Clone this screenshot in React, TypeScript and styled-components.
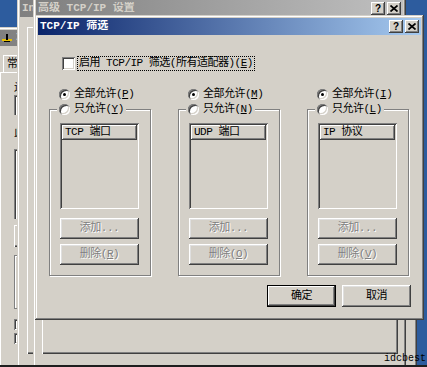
import React from 'react';
import styled, { createGlobalStyle } from 'styled-components';

const FACE = '#d4d0c8';
const FONT = `"Liberation Mono", "Noto Sans CJK SC", monospace`;

const GlobalStyle = createGlobalStyle`
	html, body {
		margin: 0;
		padding: 0;
	}

	body {
		background: #2d5c9e;
		font-family: ${FONT};
		font-size: 11px;
		color: #000;
	}
`;

const Desktop = styled.div`
	position: relative;
	width: 427px;
	height: 365px;
	overflow: hidden;
	background: #2d5c9e;
	border-bottom: 2px solid #1e1e1e;
`;

// windows sit on a free desktop, so their place is the content
const Window = styled.div<{ $x: number; $y: number; $w: number; $h: number }>`
	position: absolute;
	left: ${p => p.$x}px;
	top: ${p => p.$y}px;
	width: ${p => p.$w}px;
	height: ${p => p.$h}px;
	box-sizing: border-box;
	padding: 3px;
	background: ${FACE};
	box-shadow: inset -1px -1px #404040, inset 1px 1px ${FACE}, inset -2px -2px #808080, inset 2px 2px #fff;
	display: flex;
	flex-direction: column;
`;

const TitleBar = styled.div<{ $active?: boolean; $h?: number }>`
	flex: none;
	height: ${p => p.$h ?? 17}px;
	display: flex;
	align-items: center;
	gap: 2px;
	padding: 0 2px 0 1px;
	background: ${p => (p.$active ? 'linear-gradient(to right, #0a246a, #a6caf0)' : 'linear-gradient(to right, #808080, #c0c0c0)')};
	color: ${p => (p.$active ? '#fff' : FACE)};
	font-weight: bold;
	font-size: 11px;
	line-height: 13px;
	white-space: nowrap;
	overflow: hidden;
`;

// $clip keeps the box of a title that is covered by the next window narrow
const TitleText = styled.span<{ $clip?: number }>`
	flex: ${p => (p.$clip ? 'none' : '1')};
	width: ${p => (p.$clip ? `${p.$clip}px` : 'auto')};
	padding-left: 1px;
	overflow: hidden;
`;

const CaptionButton = styled.span`
	flex: none;
	width: 14px;
	height: 13px;
	box-sizing: border-box;
	display: flex;
	align-items: center;
	justify-content: center;
	background: ${FACE};
	box-shadow: inset -1px -1px #404040, inset 1px 1px #fff, inset -2px -2px #808080;
	color: #000;
	font: bold 10px "Liberation Sans", sans-serif;
	padding-bottom: 1px;
`;

const DialogBody = styled.div`
	flex: 1;
	display: flex;
	flex-direction: column;
	padding: 21px 10px 0 11px;
	letter-spacing: -0.5px;
	line-height: 13px;
`;

const CheckRow = styled.div`
	display: flex;
	align-items: center;
	gap: 3px;
	height: 15px;
	margin-left: 13px;
`;

const CheckBox = styled.span<{ $size?: number }>`
	flex: none;
	width: ${p => p.$size ?? 13}px;
	height: ${p => p.$size ?? 13}px;
	box-sizing: border-box;
	background: #fff;
	box-shadow: inset 1px 1px #808080, inset -1px -1px #fff, inset 2px 2px #404040, inset -2px -2px ${FACE};
`;

const FocusLabel = styled.span`
	padding: 0 1px;
	outline: 1px dotted #000;
	outline-offset: 0;
`;

const Columns = styled.div`
	display: grid;
	grid-template-columns: repeat(3, 102px);
	column-gap: 27px;
	margin-top: 16px;
`;

const Column = styled.div`
	display: flex;
	flex-direction: column;
`;

const RadioRow = styled.div<{ $indent?: number }>`
	display: flex;
	align-items: center;
	gap: 4px;
	height: 15px;
	margin-left: ${p => p.$indent ?? 0}px;
	white-space: nowrap;
`;

const Radio = styled.span<{ $checked?: boolean }>`
	position: relative;
	flex: none;
	width: 11px;
	height: 11px;
	border-radius: 50%;
	background: #fff;
	box-shadow: inset 1px 1px 0 #808080, inset -1px -1px 0 #fff, inset 2px 2px 0 #404040, inset -2px -2px 0 ${FACE};

	&::after {
		content: '';
		display: ${p => (p.$checked ? 'block' : 'none')};
		position: absolute;
		left: 4px;
		top: 4px;
		width: 3px;
		height: 3px;
		border-radius: 50%;
		background: #000;
	}
`;

const Key = styled.span`
	text-decoration: underline;
`;

const GroupBox = styled.fieldset`
	margin: 0;
	min-width: 0;
	padding: 0 11px 10px 7px;
	border: 1px solid #808080;
	box-shadow: inset 1px 1px 0 #fff, 1px 1px 0 #fff;
	display: flex;
	flex-direction: column;
`;

const Caption = styled.legend`
	padding: 0 2px;
	background: ${FACE};
`;

const GroupContent = styled.div`
	margin-left: 3px;
	display: flex;
	flex-direction: column;
`;

const ListBox = styled.div`
	height: 86px;
	margin-top: 6px;
	padding: 2px;
	box-sizing: border-box;
	background: ${FACE};
	box-shadow: inset 1px 1px #808080, inset -1px -1px #fff, inset 2px 2px #404040, inset -2px -2px ${FACE};
`;

const ListHeader = styled.div`
	height: 15px;
	box-sizing: border-box;
	padding: 1px 0 0 3px;
	line-height: 13px;
	box-shadow: inset -1px -1px #404040, inset 1px 1px #fff, inset -2px -2px #808080;
`;

const PushButton = styled.div<{ $default?: boolean; $disabled?: boolean; $w?: number; $h?: number }>`
	box-sizing: border-box;
	width: ${p => (p.$w ? `${p.$w}px` : 'auto')};
	height: ${p => p.$h ?? 21}px;
	display: flex;
	align-items: center;
	justify-content: center;
	background: ${FACE};
	color: ${p => (p.$disabled ? '#808080' : '#000')};
	text-shadow: ${p => (p.$disabled ? '1px 1px 0 #fff' : 'none')};
	box-shadow: ${p =>
		p.$default
			? 'inset 0 0 0 1px #000, inset -2px -2px #404040, inset 2px 2px #fff, inset -3px -3px #808080'
			: 'inset -1px -1px #404040, inset 1px 1px #fff, inset -2px -2px #808080, inset 2px 2px #dfdfdf'};
	margin-top: ${p => (p.$w ? 0 : 5)}px;
`;

const AddButton = styled(PushButton)`
	margin-top: 9px;
`;

const ButtonRow = styled.div`
	display: flex;
	justify-content: flex-end;
	gap: 6px;
	margin-top: 9px;
`;

/* the windows behind the dialog */

const SideTab = styled.div`
	align-self: flex-start;
	margin: 9px 0 0 3px;
	padding: 3px 8px 2px 4px;
	line-height: 12px;
	box-shadow: inset 1px 1px #fff, inset -1px 0 #404040;
`;

const SidePanel = styled.div`
	flex: 1;
	display: flex;
	flex-direction: column;
	padding-left: 14px;
	line-height: 12px;
	box-shadow: inset 1px 1px #fff;
`;

// only the first few pixels of these labels show past the next window
const SideText = styled.div<{ $top: number }>`
	margin-top: ${p => p.$top}px;
	width: 5px;
	overflow: hidden;
	white-space: nowrap;
`;

const SunkenField = styled.div<{ $top: number; $h: number }>`
	margin-top: ${p => p.$top}px;
	width: 360px;
	height: ${p => p.$h}px;
	background: #fff;
	box-shadow: inset 1px 1px #808080, inset 2px 2px #404040;
`;

const RaisedBlock = styled.div<{ $top: number; $h: number }>`
	margin-top: ${p => p.$top}px;
	width: 80px;
	height: ${p => p.$h}px;
	box-shadow: inset 1px 1px #fff, inset -1px -1px #404040, inset -2px -2px #808080;
`;

const EtchedBlock = styled.div<{ $top: number; $h: number }>`
	margin-top: ${p => p.$top}px;
	width: 360px;
	height: ${p => p.$h}px;
	border: 1px solid #808080;
	box-shadow: inset 1px 1px #fff;
`;

const SideCheck = styled(CheckBox)<{ $top: number }>`
	margin-top: ${p => p.$top}px;
`;

const TabPanel = styled.div<{ $m: string }>`
	flex: 1;
	margin: ${p => p.$m};
	box-shadow: inset 1px 1px #fff, inset -1px -1px #404040, inset -2px -2px #808080;
`;

const Watermark = styled.div`
	position: absolute;
	right: 1px;
	bottom: 0;
	font: 10px "Liberation Mono", monospace;
	line-height: 13px;
	color: #000;
`;

const CloseGlyph = () => (
	<svg width="8" height="7" viewBox="0 0 8 7">
		<path d="M0.5 0.5 L7.5 6.5 M7.5 0.5 L0.5 6.5" stroke="#000" strokeWidth="1.7" fill="none" />
	</svg>
);

const NetIcon = () => (
	<svg width="12" height="12" viewBox="0 0 12 12">
		<rect x="1" y="7" width="10" height="2" fill="#e8c000" />
		<rect x="5" y="2" width="2" height="6" fill="#000" />
		<rect x="3" y="9" width="6" height="1" fill="#000" />
	</svg>
);

const filters = [
	{ allow: 'P', only: 'Y', header: 'TCP 端口', remove: 'R' },
	{ allow: 'M', only: 'N', header: 'UDP 端口', remove: 'O' },
	{ allow: 'I', only: 'L', header: 'IP 协议', remove: 'V' }
];

function FilterColumn({ allow, only, header, remove }: (typeof filters)[number]) {
	return (
		<Column>
			<RadioRow $indent={10}>
				<Radio $checked />
				<span>全部允许(<Key>{allow}</Key>)</span>
			</RadioRow>
			<GroupBox>
				<Caption>
					<RadioRow>
						<Radio />
						<span>只允许(<Key>{only}</Key>)</span>
					</RadioRow>
				</Caption>
				<GroupContent>
					<ListBox>
						<ListHeader>{header}</ListHeader>
					</ListBox>
					<AddButton $disabled>添加...</AddButton>
					<PushButton $disabled>删除(<Key>{remove}</Key>)</PushButton>
				</GroupContent>
			</GroupBox>
		</Column>
	);
}

export default function App() {
	return (
		<Desktop>
			<GlobalStyle />

			<Window $x={-3} $y={27} $w={420} $h={345}>
				<TitleBar $h={16}>
					<NetIcon />
					<TitleText $clip={8}>本地连接 属性</TitleText>
				</TitleBar>
				<SideTab>常规</SideTab>
				<SidePanel>
					<SideText $top={10}>连接时使用:</SideText>
					<SunkenField $top={1} $h={20} />
					<SideText $top={12}>此连接使用下列项目(O):</SideText>
					<SunkenField $top={10} $h={70} />
					<RaisedBlock $top={6} $h={22} />
					<EtchedBlock $top={8} $h={52} />
					<SideCheck $size={11} $top={10} />
					<SideCheck $size={11} $top={3} />
				</SidePanel>
			</Window>

			<Window $x={17} $y={-3} $w={389} $h={380}>
				<TitleBar>
					<TitleText $clip={14}>Internet 协议 (TCP/IP) 属性</TitleText>
				</TitleBar>
				<TabPanel $m="10px 5px 20px 7px" />
			</Window>

			<Window $x={33} $y={-3} $w={373} $h={380}>
				<TitleBar>
					<TitleText>高级 TCP/IP 设置</TitleText>
					<CaptionButton>?</CaptionButton>
					<CaptionButton><CloseGlyph /></CaptionButton>
				</TitleBar>
				<TabPanel $m="27px 5px 20px 6px" />
			</Window>

			<Window $x={35} $y={15} $w={389} $h={305}>
				<TitleBar $active>
					<TitleText>TCP/IP 筛选</TitleText>
					<CaptionButton>?</CaptionButton>
					<CaptionButton><CloseGlyph /></CaptionButton>
				</TitleBar>
				<DialogBody>
					<CheckRow>
						<CheckBox />
						<FocusLabel>启用 TCP/IP 筛选(所有适配器)(<Key>E</Key>)</FocusLabel>
					</CheckRow>
					<Columns>
						{filters.map(f => (
							<FilterColumn key={f.header} {...f} />
						))}
					</Columns>
					<ButtonRow>
						<PushButton $default $w={69} $h={22}>确定</PushButton>
						<PushButton $w={69} $h={22}>取消</PushButton>
					</ButtonRow>
				</DialogBody>
			</Window>

			<Watermark>idcbest</Watermark>
		</Desktop>
	);
}
